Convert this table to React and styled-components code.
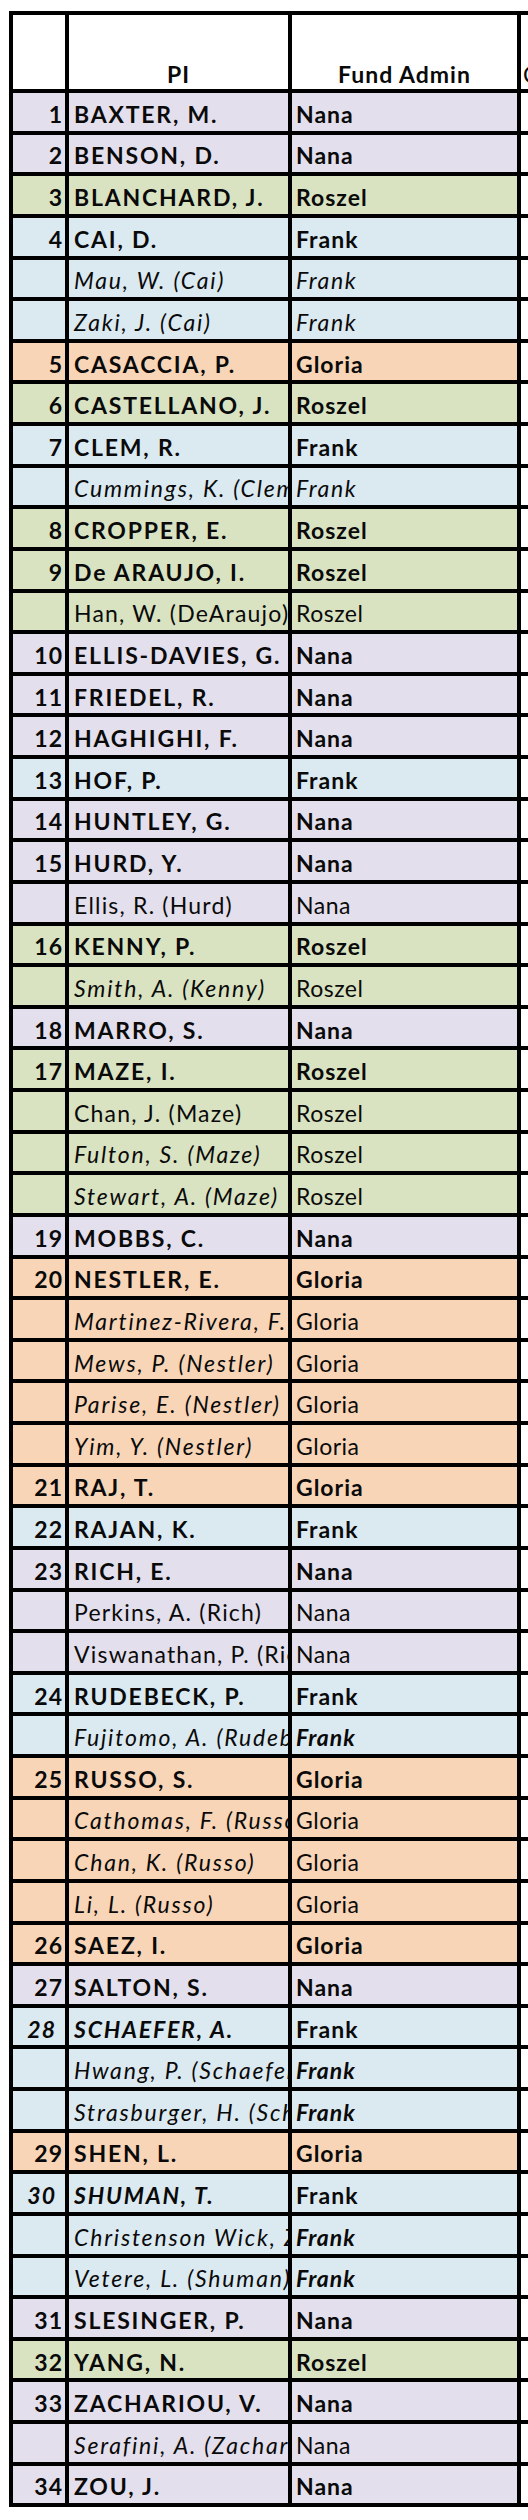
import React from "react";
import styled, { createGlobalStyle } from "styled-components";

const tints = {
  Nana: "#e3dfec",
  Roszel: "#d9e3c1",
  Frank: "#dbe9f1",
  Gloria: "#f8d5b7",
};

const rows = [
  { n: "1", name: "BAXTER, M.", admin: "Nana" },
  { n: "2", name: "BENSON, D.", admin: "Nana" },
  { n: "3", name: "BLANCHARD, J.", admin: "Roszel" },
  { n: "4", name: "CAI, D.", admin: "Frank" },
  { name: "Mau, W. (Cai)", admin: "Frank", nameKind: "italic", adminKind: "italic" },
  { name: "Zaki, J. (Cai)", admin: "Frank", nameKind: "italic", adminKind: "italic" },
  { n: "5", name: "CASACCIA, P.", admin: "Gloria" },
  { n: "6", name: "CASTELLANO, J.", admin: "Roszel" },
  { n: "7", name: "CLEM, R.", admin: "Frank" },
  { name: "Cummings, K. (Clem)", admin: "Frank", nameKind: "italic", adminKind: "italic" },
  { n: "8", name: "CROPPER, E.", admin: "Roszel" },
  { n: "9", name: "De ARAUJO, I.", admin: "Roszel" },
  { name: "Han, W. (DeAraujo)", admin: "Roszel", nameKind: "plain", adminKind: "plain" },
  { n: "10", name: "ELLIS-DAVIES, G.", admin: "Nana" },
  { n: "11", name: "FRIEDEL, R.", admin: "Nana" },
  { n: "12", name: "HAGHIGHI, F.", admin: "Nana" },
  { n: "13", name: "HOF, P.", admin: "Frank" },
  { n: "14", name: "HUNTLEY, G.", admin: "Nana" },
  { n: "15", name: "HURD, Y.", admin: "Nana" },
  { name: "Ellis, R. (Hurd)", admin: "Nana", nameKind: "plain", adminKind: "plain" },
  { n: "16", name: "KENNY, P.", admin: "Roszel" },
  { name: "Smith, A. (Kenny)", admin: "Roszel", nameKind: "italic", adminKind: "plain" },
  { n: "18", name: "MARRO, S.", admin: "Nana" },
  { n: "17", name: "MAZE, I.", admin: "Roszel" },
  { name: "Chan, J. (Maze)", admin: "Roszel", nameKind: "plain", adminKind: "plain" },
  { name: "Fulton, S. (Maze)", admin: "Roszel", nameKind: "italic", adminKind: "plain" },
  { name: "Stewart, A. (Maze)", admin: "Roszel", nameKind: "italic", adminKind: "plain" },
  { n: "19", name: "MOBBS, C.", admin: "Nana" },
  { n: "20", name: "NESTLER, E.", admin: "Gloria" },
  { name: "Martinez-Rivera, F. (Nestler)", admin: "Gloria", nameKind: "italic", adminKind: "plain" },
  { name: "Mews, P. (Nestler)", admin: "Gloria", nameKind: "italic", adminKind: "plain" },
  { name: "Parise, E. (Nestler)", admin: "Gloria", nameKind: "italic", adminKind: "plain" },
  { name: "Yim, Y. (Nestler)", admin: "Gloria", nameKind: "italic", adminKind: "plain" },
  { n: "21", name: "RAJ, T.", admin: "Gloria" },
  { n: "22", name: "RAJAN, K.", admin: "Frank" },
  { n: "23", name: "RICH, E.", admin: "Nana" },
  { name: "Perkins, A. (Rich)", admin: "Nana", nameKind: "plain", adminKind: "plain" },
  { name: "Viswanathan, P. (Rich)", admin: "Nana", nameKind: "plain", adminKind: "plain" },
  { n: "24", name: "RUDEBECK, P.", admin: "Frank" },
  { name: "Fujitomo, A. (Rudebeck)", admin: "Frank", nameKind: "italic", adminKind: "boldItalic" },
  { n: "25", name: "RUSSO, S.", admin: "Gloria" },
  { name: "Cathomas, F. (Russo)", admin: "Gloria", nameKind: "italic", adminKind: "plain" },
  { name: "Chan, K. (Russo)", admin: "Gloria", nameKind: "italic", adminKind: "plain" },
  { name: "Li, L. (Russo)", admin: "Gloria", nameKind: "italic", adminKind: "plain" },
  { n: "26", name: "SAEZ, I.", admin: "Gloria" },
  { n: "27", name: "SALTON, S.", admin: "Nana" },
  { n: "28", name: "SCHAEFER, A.", admin: "Frank", nameKind: "boldItalic" },
  { name: "Hwang, P. (Schaefer)", admin: "Frank", nameKind: "italic", adminKind: "boldItalic" },
  { name: "Strasburger, H. (Schaefer)", admin: "Frank", nameKind: "italic", adminKind: "boldItalic" },
  { n: "29", name: "SHEN, L.", admin: "Gloria" },
  { n: "30", name: "SHUMAN, T.", admin: "Frank", nameKind: "boldItalic" },
  { name: "Christenson Wick, Z. (Shuman)", admin: "Frank", nameKind: "italic", adminKind: "boldItalic" },
  { name: "Vetere, L. (Shuman)", admin: "Frank", nameKind: "italic", adminKind: "boldItalic" },
  { n: "31", name: "SLESINGER, P.", admin: "Nana" },
  { n: "32", name: "YANG, N.", admin: "Roszel" },
  { n: "33", name: "ZACHARIOU, V.", admin: "Nana" },
  { name: "Serafini, A. (Zachariou)", admin: "Nana", nameKind: "italic", adminKind: "plain" },
  { n: "34", name: "ZOU, J.", admin: "Nana" },
];

// weight / style for each kind of cell text
const kinds = {
  bold: "font-weight: 700; font-style: normal;",
  boldItalic: "font-weight: 700; font-style: italic;",
  italic: "font-weight: 400; font-style: italic;",
  plain: "font-weight: 400; font-style: normal;",
};

const nameSpacing = { bold: 1.8, boldItalic: 1.8, italic: 1.8, plain: 1.2 };
const adminSpacing = { bold: 1, boldItalic: 1, italic: 1.6, plain: 0.5 };

const GlobalStyle = createGlobalStyle`
  html, body {
    margin: 0;
    padding: 0;
    background: #fff;
  }
  body {
    font-family: Lato, "Liberation Sans", sans-serif;
    color: #000;
  }
`;

const Page = styled.div`
  width: 528px;
  overflow: hidden;
  padding: 11px 0 12px 9px;
  box-sizing: border-box;
`;

const Sheet = styled.div`
  width: 560px;
  display: flex;
  flex-direction: column;
  gap: 4px;
  padding: 4px 0 4px 4px;
  background: #000;
`;

const Row = styled.div`
  display: grid;
  grid-template-columns: 52px 219px 225px 1fr;
  column-gap: 4px;
  height: ${(p) => p.$h}px;
`;

const Cell = styled.div`
  display: flex;
  align-items: center;
  padding-top: 5px;
  box-sizing: border-box;
  overflow: hidden;
  white-space: nowrap;
  font-size: 23px;
  line-height: 1;
  color: #0a0a0a;
  background: ${(p) => p.$tint || "#fff"};
  ${(p) => kinds[p.$kind || "bold"]}
`;

const IndexCell = styled(Cell)`
  justify-content: flex-end;
  padding-right: ${(p) => (p.$kind === "boldItalic" ? "9px" : "2px")};
  letter-spacing: 1px;
`;

const NameCell = styled(Cell)`
  padding-left: 5px;
  letter-spacing: ${(p) => nameSpacing[p.$kind || "bold"]}px;
`;

const AdminCell = styled(Cell)`
  padding-left: 4px;
  letter-spacing: ${(p) => adminSpacing[p.$kind || "bold"]}px;
`;

const HeaderCell = styled(Cell)`
  align-items: flex-end;
  justify-content: center;
  padding: 0 0 3px;
  letter-spacing: 1px;
`;

const SideHeader = styled(HeaderCell)`
  justify-content: flex-start;
  padding-left: 2px;
  font-weight: 400;
`;

export default function App() {
  return (
    <Page>
      <GlobalStyle />
      <Sheet>
        <Row $h={74}>
          <HeaderCell />
          <HeaderCell>PI</HeaderCell>
          <HeaderCell>Fund Admin</HeaderCell>
          <SideHeader>Comments</SideHeader>
        </Row>
        {rows.map((r, i) => {
          const tint = tints[r.admin];
          const nameKind = r.nameKind || "bold";
          return (
            <Row key={i} $h={37.64}>
              <IndexCell $tint={tint} $kind={nameKind === "boldItalic" ? "boldItalic" : "bold"}>
                {r.n}
              </IndexCell>
              <NameCell $tint={tint} $kind={nameKind}>
                {r.name}
              </NameCell>
              <AdminCell $tint={tint} $kind={r.adminKind || "bold"}>
                {r.admin}
              </AdminCell>
              <Cell />
            </Row>
          );
        })}
      </Sheet>
    </Page>
  );
}
